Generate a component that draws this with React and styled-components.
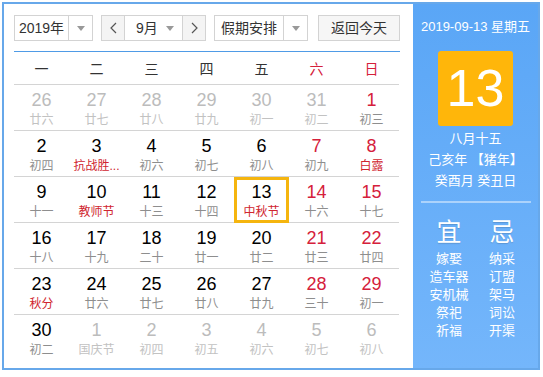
import React from 'react';
import styled, {createGlobalStyle, css} from 'styled-components';

const GlobalStyle = createGlobalStyle`
    html, body {
        margin: 0;
        padding: 0;
        background: #fff;
    }
    body {
        font-family: "Liberation Sans", "Noto Sans CJK SC", sans-serif;
    }
`;

const WEEKDAYS = ['一', '二', '三', '四', '五', '六', '日'];

// [day, lunar, flags]  o = other month, f = festival, t = today
const WEEKS = [
    [[26, '廿六', 'o'], [27, '廿七', 'o'], [28, '廿八', 'o'], [29, '廿九', 'o'], [30, '初一', 'o'], [31, '初二', 'o'], [1, '初三']],
    [[2, '初四'], [3, '抗战胜...', 'f'], [4, '初六'], [5, '初七'], [6, '初八'], [7, '初九'], [8, '白露', 'f']],
    [[9, '十一'], [10, '教师节', 'f'], [11, '十三'], [12, '十四'], [13, '中秋节', 'ft'], [14, '十六'], [15, '十七']],
    [[16, '十八'], [17, '十九'], [18, '二十'], [19, '廿一'], [20, '廿二'], [21, '廿三'], [22, '廿四']],
    [[23, '秋分', 'f'], [24, '廿六'], [25, '廿七'], [26, '廿八'], [27, '廿九'], [28, '三十'], [29, '初一']],
    [[30, '初二'], [1, '国庆节', 'o'], [2, '初四', 'o'], [3, '初五', 'o'], [4, '初六', 'o'], [5, '初七', 'o'], [6, '初八', 'o']]
];

const GOOD = ['嫁娶', '造车器', '安机械', '祭祀', '祈福'];
const BAD = ['纳采', '订盟', '架马', '词讼', '开渠'];

const Caret = () => (
    <svg width="8" height="5" viewBox="0 0 8 5">
        <path d="M0 0 L8 0 L4 5 Z" fill="#999"/>
    </svg>
);

const Chevron = ({dir}) => (
    <svg width="7" height="12" viewBox="0 0 7 12">
        <path
            d={dir === 'left' ? 'M6 1 L1 6 L6 11' : 'M1 1 L6 6 L1 11'}
            fill="none"
            stroke="#555"
            strokeWidth="1.2"
        />
    </svg>
);

export default function App() {
    return (
        <>
            <GlobalStyle/>
            <Widget>
                <Main>
                    <Toolbar>
                        <Select width={79}>
                            <SelectText>2019年</SelectText>
                            <SelectArrow><Caret/></SelectArrow>
                        </Select>
                        <MonthGroup>
                            <NavButton><Chevron dir="left"/></NavButton>
                            <MonthSelect>
                                <span>9月</span>
                                <Caret/>
                            </MonthSelect>
                            <NavButton><Chevron dir="right"/></NavButton>
                        </MonthGroup>
                        <Select width={94}>
                            <SelectText>假期安排</SelectText>
                            <SelectArrow><Caret/></SelectArrow>
                        </Select>
                        <TodayButton>返回今天</TodayButton>
                    </Toolbar>
                    <Grid>
                        {WEEKDAYS.map((w, i) => (
                            <WeekHead key={w} weekend={i > 4}>{w}</WeekHead>
                        ))}
                        {WEEKS.map((week, r) => week.map(([day, lunar, flags = ''], c) => (
                            <Cell
                                key={`${r}-${c}`}
                                today={flags.includes('t')}
                                last={r === WEEKS.length - 1}
                            >
                                <Day other={flags.includes('o')} weekend={c > 4}>{day}</Day>
                                <Lunar other={flags.includes('o')} festival={flags.includes('f')}>{lunar}</Lunar>
                            </Cell>
                        )))}
                    </Grid>
                </Main>
                <Side>
                    <DateLine>2019-09-13 星期五</DateLine>
                    <BigDay>13</BigDay>
                    <LunarInfo>
                        <div>八月十五</div>
                        <div>己亥年 【猪年】</div>
                        <div>癸酉月 癸丑日</div>
                    </LunarInfo>
                    <Divider/>
                    <Advice>
                        <AdviceCol>
                            <AdviceTitle>宜</AdviceTitle>
                            {GOOD.map(t => <AdviceItem key={t}>{t}</AdviceItem>)}
                        </AdviceCol>
                        <AdviceCol>
                            <AdviceTitle>忌</AdviceTitle>
                            {BAD.map(t => <AdviceItem key={t}>{t}</AdviceItem>)}
                        </AdviceCol>
                    </Advice>
                </Side>
            </Widget>
        </>
    );
}

const Widget = styled.div`
    margin: 2px 0 0 2px;
    width: 534px;
    height: 364px;
    border: 2px solid #67a8ea;
    display: flex;
    background: #fff;
`;

const Main = styled.div`
    width: 386px;
    padding: 10px 13px 0 10px;
    display: flex;
    flex-direction: column;
`;

const Toolbar = styled.div`
    display: flex;
    align-items: center;
    height: 26px;
    margin-top: 1px;
    padding-bottom: 10px;
    border-bottom: 1px solid #4f9be6;
    font-size: 14px;
    color: #333;
`;

const boxBase = css`
    box-sizing: border-box;
    height: 26px;
    border: 1px solid #d3d3d3;
    display: flex;
    align-items: stretch;
`;

const Select = styled.div`
    ${boxBase};
    width: ${props => props.width}px;
    margin-right: 8px;
    background: #fff;
`;

const SelectText = styled.div`
    flex: 1;
    display: flex;
    align-items: center;
    justify-content: center;
    line-height: 24px;
`;

const SelectArrow = styled.div`
    width: 23px;
    border-left: 1px solid #d3d3d3;
    display: flex;
    align-items: center;
    justify-content: center;
`;

const MonthGroup = styled.div`
    ${boxBase};
    width: 105px;
    margin-right: 8px;
`;

const NavButton = styled.div`
    width: 22px;
    background: #f4f4f4;
    display: flex;
    align-items: center;
    justify-content: center;
`;

const MonthSelect = styled.div`
    flex: 1;
    border-left: 1px solid #d3d3d3;
    border-right: 1px solid #d3d3d3;
    background: #fff;
    display: flex;
    align-items: center;
    justify-content: space-between;
    padding: 0 8px 0 11px;
    line-height: 24px;
`;

const TodayButton = styled.div`
    ${boxBase};
    margin-left: 2px;
    width: 82px;
    background: #f6f6f6;
    align-items: center;
    justify-content: center;
    line-height: 24px;
`;

const Grid = styled.div`
    display: grid;
    grid-template-columns: repeat(7, 55px);
    grid-template-rows: 33px repeat(6, 46px);
`;

const red = '#d5203b';

const WeekHead = styled.div`
    display: flex;
    align-items: center;
    justify-content: center;
    font-size: 14px;
    color: ${props => props.weekend ? red : '#333'};
    border-bottom: 1px solid #d4d4d4;
`;

const Cell = styled.div`
    display: flex;
    flex-direction: column;
    align-items: center;
    padding-top: 5px;
    box-sizing: border-box;
    border-bottom: ${props => props.last ? 'none' : '1px solid #d4d4d4'};
    ${props => props.today && css`
        outline: 3px solid #f5b50f;
        outline-offset: -3px;
    `}
`;

const Day = styled.div`
    font-size: 18px;
    line-height: 20px;
    color: ${props => props.other ? '#bcbcbc' : props.weekend ? red : '#000'};
`;

const Lunar = styled.div`
    margin-top: 2px;
    font-size: 12px;
    line-height: 16px;
    white-space: nowrap;
    color: ${props => props.other ? '#c2c2c2' : props.festival ? '#d0262f' : '#8e8e8e'};
`;

const Side = styled.div`
    flex: 1;
    background: linear-gradient(#5aa6f6, #74b6fb);
    color: #fff;
    display: flex;
    flex-direction: column;
    align-items: center;
`;

const DateLine = styled.div`
    margin-top: 14px;
    font-size: 13px;
    line-height: 18px;
    white-space: nowrap;
`;

const BigDay = styled.div`
    margin-top: 15px;
    width: 75px;
    height: 75px;
    border-radius: 3px;
    background: #ffb60a;
    font-size: 52px;
    line-height: 75px;
    text-align: center;
`;

const LunarInfo = styled.div`
    margin-top: 2px;
    font-size: 13px;
    line-height: 21px;
    text-align: center;
    white-space: nowrap;
`;

const Divider = styled.div`
    margin-top: 10px;
    width: 110px;
    height: 2px;
    background: rgba(255, 255, 255, 0.45);
`;

const Advice = styled.div`
    margin-top: 16px;
    display: flex;
    gap: 9px;
`;

const AdviceCol = styled.div`
    width: 44px;
    display: flex;
    flex-direction: column;
    align-items: center;
`;

const AdviceTitle = styled.div`
    font-size: 25px;
    line-height: 26px;
    margin-bottom: 5px;
    text-shadow: 0 1px 1px rgba(0, 0, 0, 0.15);
`;

const AdviceItem = styled.div`
    font-size: 13px;
    line-height: 18px;
    white-space: nowrap;
`;
